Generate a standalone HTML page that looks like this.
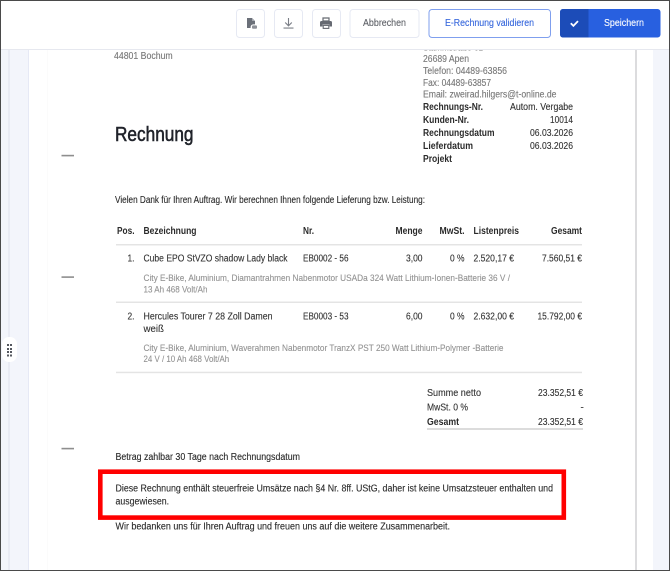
<!DOCTYPE html>
<html lang="de">
<head>
<meta charset="utf-8">
<title>Rechnung</title>
<style>
html,body{margin:0;padding:0;width:670px;height:571px;overflow:hidden;background:#fff}
svg{display:block;position:absolute;left:0;top:0;filter:blur(.35px)}
text{font-family:"Liberation Sans",sans-serif;font-size:10px;fill:#333;stroke:#333;stroke-width:.12;white-space:pre}
.b{font-weight:700;fill:#2b2b2b;stroke:none}
.g{fill:#777;stroke:#777}
.d{fill:#939393;stroke:#939393;font-size:9.5px}
.t{fill:#2a2a2a;stroke:#2a2a2a}
</style>
</head>
<body>
<svg width="670" height="571" viewBox="0 0 670 571" xmlns="http://www.w3.org/2000/svg">
  <!-- background -->
  <rect width="670" height="571" fill="#f3f5fb"/>
  <rect x="8" y="0" width="2" height="571" fill="#e9ebf4"/>
  <rect x="28" y="0" width="1.5" height="571" fill="#e6e9f5"/>
  <rect x="29" y="0" width="624" height="571" fill="#fff"/>
  <rect x="47" y="0" width="1" height="571" fill="#fbfbfb"/>
  <rect x="635" y="0" width="2" height="571" fill="#dcdcde"/>

  <!-- document -->
  <text x="114" y="59" textLength="58.7" lengthAdjust="spacingAndGlyphs" class="g">44801 Bochum</text>
  <text x="423" y="50.5" textLength="60" lengthAdjust="spacingAndGlyphs" class="g">Stammstraße 61</text>
  <text x="423" y="62" textLength="46" lengthAdjust="spacingAndGlyphs" class="g">26689 Apen</text>
  <text x="423" y="74" textLength="84" lengthAdjust="spacingAndGlyphs" class="g">Telefon: 04489-63856</text>
  <text x="423" y="86" textLength="68" lengthAdjust="spacingAndGlyphs" class="g">Fax: 04489-63857</text>
  <text x="423" y="97.5" textLength="133.5" lengthAdjust="spacingAndGlyphs" class="g">Email: zweirad.hilgers@t-online.de</text>

  <text x="423" y="110" textLength="60" lengthAdjust="spacingAndGlyphs" class="b">Rechnungs-Nr.</text>
  <text x="510" y="110" textLength="63" lengthAdjust="spacingAndGlyphs">Autom. Vergabe</text>
  <text x="423" y="123" textLength="46" lengthAdjust="spacingAndGlyphs" class="b">Kunden-Nr.</text>
  <text x="550" y="123" textLength="23" lengthAdjust="spacingAndGlyphs">10014</text>
  <text x="423" y="136" textLength="71.5" lengthAdjust="spacingAndGlyphs" class="b">Rechnungsdatum</text>
  <text x="530" y="136" textLength="43" lengthAdjust="spacingAndGlyphs">06.03.2026</text>
  <text x="423" y="149" textLength="50" lengthAdjust="spacingAndGlyphs" class="b">Lieferdatum</text>
  <text x="530" y="149" textLength="43" lengthAdjust="spacingAndGlyphs">06.03.2026</text>
  <text x="423" y="162" textLength="29" lengthAdjust="spacingAndGlyphs" class="b">Projekt</text>

  <text x="115" y="141" textLength="78.5" lengthAdjust="spacingAndGlyphs" style="font-size:20px;fill:#20232a;stroke:#20232a;stroke-width:.55">Rechnung</text>

  <rect x="61.5" y="154.8" width="12.5" height="1.6" fill="#8e8e8e"/>
  <rect x="61.5" y="276.300" width="12.5" height="1.6" fill="#8e8e8e"/>
  <rect x="61.5" y="447.800" width="12.5" height="1.6" fill="#8e8e8e"/>

  <text x="115" y="203" textLength="310" lengthAdjust="spacingAndGlyphs" class="t">Vielen Dank für Ihren Auftrag. Wir berechnen Ihnen folgende Lieferung bzw. Leistung:</text>

  <!-- table -->
  <text x="117" y="234" textLength="17.5" lengthAdjust="spacingAndGlyphs" class="b">Pos.</text>
  <text x="143.5" y="234" textLength="53" lengthAdjust="spacingAndGlyphs" class="b">Bezeichnung</text>
  <text x="303" y="234" textLength="11" lengthAdjust="spacingAndGlyphs" class="b">Nr.</text>
  <text x="395.5" y="234" textLength="27" lengthAdjust="spacingAndGlyphs" class="b">Menge</text>
  <text x="439.5" y="234" textLength="25" lengthAdjust="spacingAndGlyphs" class="b">MwSt.</text>
  <text x="473.5" y="234" textLength="45.5" lengthAdjust="spacingAndGlyphs" class="b">Listenpreis</text>
  <text x="551" y="234" textLength="31" lengthAdjust="spacingAndGlyphs" class="b">Gesamt</text>
  <rect x="116" y="244" width="466" height="1.5" fill="#e4e4e4"/>

  <text x="127.5" y="261.5" textLength="7" lengthAdjust="spacingAndGlyphs">1.</text>
  <text x="143.5" y="261.5" textLength="144" lengthAdjust="spacingAndGlyphs">Cube EPO StVZO shadow Lady black</text>
  <text x="303" y="261.5" textLength="45.5" lengthAdjust="spacingAndGlyphs">EB0002 - 56</text>
  <text x="406" y="261.5" textLength="16.5" lengthAdjust="spacingAndGlyphs">3,00</text>
  <text x="450" y="261.5" textLength="14.5" lengthAdjust="spacingAndGlyphs">0 %</text>
  <text x="473.5" y="261.5" textLength="40.5" lengthAdjust="spacingAndGlyphs">2.520,17 €</text>
  <text x="542" y="261.5" textLength="40" lengthAdjust="spacingAndGlyphs">7.560,51 €</text>
  <text x="143.5" y="281" textLength="366.5" lengthAdjust="spacingAndGlyphs" class="d">City E-Bike, Aluminium, Diamantrahmen Nabenmotor USADa 324 Watt Lithium-Ionen-Batterie 36 V /</text>
  <text x="143.5" y="292.5" textLength="64" lengthAdjust="spacingAndGlyphs" class="d">13 Ah 468 Volt/Ah</text>
  <rect x="116" y="301.5" width="466" height="1.5" fill="#e4e4e4"/>

  <text x="127.5" y="319.5" textLength="7" lengthAdjust="spacingAndGlyphs">2.</text>
  <text x="143.5" y="319.5" textLength="129" lengthAdjust="spacingAndGlyphs">Hercules Tourer 7 28 Zoll Damen</text>
  <text x="143.5" y="332" textLength="20.5" lengthAdjust="spacingAndGlyphs">weiß</text>
  <text x="303" y="319.5" textLength="45.5" lengthAdjust="spacingAndGlyphs">EB0003 - 53</text>
  <text x="406" y="319.5" textLength="16.5" lengthAdjust="spacingAndGlyphs">6,00</text>
  <text x="450" y="319.5" textLength="14.5" lengthAdjust="spacingAndGlyphs">0 %</text>
  <text x="473.5" y="319.5" textLength="40.5" lengthAdjust="spacingAndGlyphs">2.632,00 €</text>
  <text x="537.5" y="319.5" textLength="44.5" lengthAdjust="spacingAndGlyphs">15.792,00 €</text>
  <text x="143.5" y="351" textLength="360" lengthAdjust="spacingAndGlyphs" class="d">City E-Bike, Aluminium, Waverahmen Nabenmotor TranzX PST 250 Watt Lithium-Polymer -Batterie</text>
  <text x="143.5" y="362" textLength="85.7" lengthAdjust="spacingAndGlyphs" class="d">24 V / 10 Ah 468 Volt/Ah</text>
  <rect x="116" y="371.7" width="466" height="1.5" fill="#e4e4e4"/>

  <!-- totals -->
  <text x="427" y="396" textLength="54" lengthAdjust="spacingAndGlyphs">Summe netto</text>
  <text x="538" y="396" textLength="45" lengthAdjust="spacingAndGlyphs">23.352,51 €</text>
  <text x="427" y="410.5" textLength="41" lengthAdjust="spacingAndGlyphs">MwSt. 0 %</text>
  <text x="580.5" y="410.5">-</text>
  <text x="427" y="425" textLength="32" lengthAdjust="spacingAndGlyphs" class="b">Gesamt</text>
  <text x="538" y="425" textLength="45" lengthAdjust="spacingAndGlyphs">23.352,51 €</text>
  <rect x="427" y="428" width="156" height="2" fill="#dcdcdc"/>

  <!-- notes -->
  <text x="115.5" y="460" textLength="184.5" lengthAdjust="spacingAndGlyphs" class="t">Betrag zahlbar 30 Tage nach Rechnungsdatum</text>
  <text x="115.5" y="491.7" textLength="437.5" lengthAdjust="spacingAndGlyphs" class="t">Diese Rechnung enthält steuerfreie Umsätze nach §4 Nr. 8ff. UStG, daher ist keine Umsatzsteuer enthalten und</text>
  <text x="115.5" y="504.7" textLength="53.5" lengthAdjust="spacingAndGlyphs" class="t">ausgewiesen.</text>
  <text x="115.5" y="529.5" textLength="334.5" lengthAdjust="spacingAndGlyphs" class="t">Wir bedanken uns für Ihren Auftrag und freuen uns auf die weitere Zusammenarbeit.</text>

  <!-- red highlight -->
  <rect x="100.3" y="471.7" width="463.5" height="45.9" fill="none" stroke="#ff0000" stroke-width="4.6"/>

  <!-- drag handle -->
  <rect x="2" y="337" width="15" height="25" rx="7" fill="#fff"/>
  <g fill="#55585f">
    <rect x="7" y="344" width="2" height="2"/><rect x="10" y="344" width="2" height="2"/>
    <rect x="7" y="348" width="2" height="2"/><rect x="10" y="348" width="2" height="2"/>
    <rect x="7" y="351" width="2" height="2"/><rect x="10" y="351" width="2" height="2"/>
    <rect x="7" y="354.5" width="2" height="2"/><rect x="10" y="354.5" width="2" height="2"/>
  </g>

  <!-- toolbar -->
  <rect x="0" y="0" width="670" height="49.5" fill="#fff"/>
  <rect x="0" y="49" width="670" height="1" fill="#e6e8ef"/>

  <g fill="#fff" stroke="#e6e9f3" stroke-width="1">
    <rect x="236.5" y="9.5" width="28" height="28" rx="3"/>
    <rect x="274.5" y="9.5" width="28" height="28" rx="3"/>
    <rect x="312.5" y="9.5" width="28" height="28" rx="3"/>
    <rect x="350" y="9.5" width="69" height="28" rx="3"/>
  </g>
  <rect x="429" y="9.5" width="121.5" height="28" rx="3" fill="#fff" stroke="#7f9fee" stroke-width="1"/>

  <!-- file icon -->
  <path d="M247 18h5l3 3v3.4h-1.8a2.6 2.6 0 0 0-2.6 2.6v1H247z" fill="#6b7079"/>
  <path d="M252 18l3 3h-3z" fill="#a4a8af"/>
  <rect x="252" y="25.4" width="5" height="3.4" rx="1" fill="#8d9198"/>
  <!-- download icon -->
  <path d="M288.5 18v7.5M285.2 22.5l3.3 3.3 3.3-3.3" fill="none" stroke="#7a7e86" stroke-width="1.1"/>
  <rect x="283.5" y="27.5" width="10" height="1.1" fill="#7a7e86"/>
  <!-- print icon -->
  <path d="M323 18h6v3h-6z" fill="none" stroke="#666a72" stroke-width="1.2"/>
  <path d="M321.5 21h9a1.5 1.5 0 0 1 1.5 1.5v4h-2.5v-2h-7v2H320v-4a1.5 1.5 0 0 1 1.5-1.5z" fill="#666a72"/>
  <rect x="323.2" y="25.4" width="5.6" height="3" fill="none" stroke="#666a72" stroke-width="1.1"/>

  <text x="363" y="26" textLength="43" lengthAdjust="spacingAndGlyphs" style="fill:#5f6268;stroke:#5f6268">Abbrechen</text>
  <text x="445" y="26" textLength="89" lengthAdjust="spacingAndGlyphs" style="fill:#3566dc;stroke:#3566dc">E-Rechnung validieren</text>

  <rect x="560" y="9" width="100.5" height="28.5" rx="3" fill="#2860e0"/>
  <path d="M563 9h25.5v28.5H563a3 3 0 0 1-3-3V12a3 3 0 0 1 3-3z" fill="#1c4cb8"/>
  <path d="M570.8 23.3l2.600 2.600 4.600-4.800" fill="none" stroke="#fff" stroke-width="1.8"/>
  <text x="604" y="26" textLength="40" lengthAdjust="spacingAndGlyphs" style="fill:#fff;stroke:#fff">Speichern</text>

  <!-- outer screenshot frame -->
  <rect x="0.5" y="0.5" width="669" height="570" fill="none" stroke="#4a4a4a" stroke-width="1"/>
</svg>
</body>
</html>
